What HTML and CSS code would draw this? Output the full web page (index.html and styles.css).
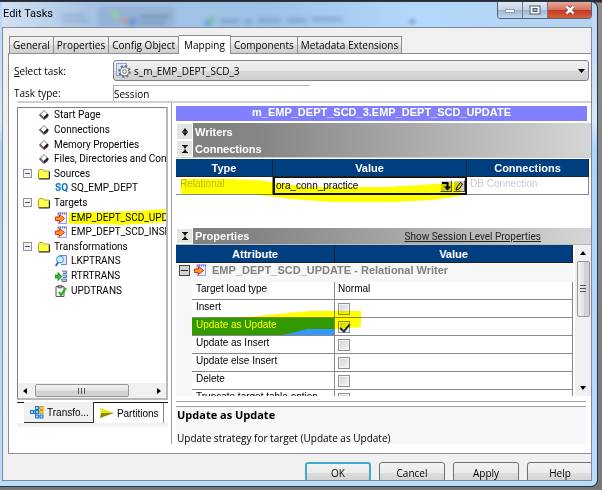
FILE: index.html
```html
<!DOCTYPE html>
<html lang="en">
<head>
    <meta charset="UTF-8">
    <meta name="viewport" content="width=device-width, initial-scale=1.0">
    <title>Edit Tasks</title>
    <link rel="stylesheet" href="styles.css">
</head>
<body>

<!-- Shared icons -->
<svg class="icon-defs" aria-hidden="true">
    <symbol id="icon-page" viewBox="0 0 10 10">
        <path d="M1 5 L5 1 L9 5 L5 9 Z" fill="#111"/>
        <path d="M2 4.500 L5 1.500 L7.500 4 L4.500 7 Z" fill="#fff"/>
        <path d="M1 5 L5 9 L5 7 L2 4 Z" fill="#666"/>
        <path d="M5 8 L9 5 L8 7 L5 9 Z" fill="#703070"/>
    </symbol>
    <symbol id="icon-folder" viewBox="0 0 12 11">
        <path d="M.5 2.500 L1.500 1 H5 L6 2.500 H11 V10 H.5 Z" fill="#ffff4a" stroke="#a8a840"/>
        <path d="M11.500 3 V10.500 H1" fill="none" stroke="#222"/>
    </symbol>
    <symbol id="icon-target" viewBox="0 0 12 12">
        <path d="M3 1 H11.500 V11.500 H3 Z" fill="#eef0ff" stroke="#9a9ae8"/>
        <path d="M3 1.500 H12" stroke="#6666dd" stroke-width="2" stroke-dasharray="1 1"/>
        <path d="M.5 5 H4.500 V2.500 L9.500 6.500 L4.500 10.500 V8.500 H.5 Z" fill="#ff9a1a" stroke="#d8321a"/>
    </symbol>
    <symbol id="icon-lookup" viewBox="0 0 12 12">
        <path d="M4 .5 H11.500 V9.500 H6" fill="#dfe6ff" stroke="#6a7ee0"/>
        <circle cx="5" cy="4.500" r="3.500" fill="#c8ecff" stroke="#3b8fe0"/>
        <path d="M3 7.500 L.8 11" stroke="#2a62c8" stroke-width="2"/>
    </symbol>
    <symbol id="icon-router" viewBox="0 0 12 12">
        <path d="M0 5 H3 V2.500 L7 6.500 L3 10.500 V8 H0 Z" fill="#33b52e" stroke="#127a18" stroke-width=".7"/>
        <path d="M7 1 H11.500 V3.500 H8 M7.500 5 H11.500 V7.500 H8 M6.500 9 H11.500 V11.500 H7 Z" fill="#b7ccec" stroke="#3c5f9c" stroke-width=".8"/>
    </symbol>
    <symbol id="icon-update" viewBox="0 0 12 12">
        <path d="M1 1.500 H9 V11.500 H1 Z" fill="#fff" stroke="#555"/>
        <path d="M3 .5 H7 V3 H3 Z" fill="#999" stroke="#444" stroke-width=".6"/>
        <path d="M4 7 L6 10 L11 3" fill="none" stroke="#2eb12a" stroke-width="2.200"/>
    </symbol>
    <symbol id="icon-collapse" viewBox="0 0 8 10">
        <path d="M1 1.500 H7 M1 8.500 H7" stroke="#111"/>
        <path d="M2 2 H6 L4 5 L6 8 H2 L4 5 Z" fill="#111"/>
    </symbol>
    <symbol id="icon-expand" viewBox="0 0 8 10">
        <path d="M4 1 L6.500 4.200 H1.500 Z M4 9 L6.500 5.800 H1.500 Z M1 4.500 H7 V5.500 H1 Z" fill="#111"/>
    </symbol>
</svg>

<div class="dialog">

    <!-- Title bar -->
    <div class="titlebar">
        <svg class="glass" viewBox="0 0 480 26" aria-hidden="true">
            <g class="glass-blur">
                <path d="M52 14 H78 M52 20 H80" stroke="#7893b4" stroke-width="2"/>
                <rect x="90" y="5" width="80" height="21" fill="#8eacd0"/>
                <circle cx="108" cy="13" r="4" fill="#8ed07c"/>
                <circle cx="118" cy="19" r="3" fill="#e08860"/>
                <circle cx="126" cy="21" r="4" fill="#4f7fd0"/>
                <path d="M133 15 H165 M133 22 H160" stroke="#506c90" stroke-width="2"/>
                <circle cx="208" cy="19" r="4" fill="#78c078"/>
                <circle cx="204" cy="22" r="3" fill="#5b88d8"/>
                <path d="M218 20 H238 M243 20 H251 M257 19 H280 M287 19 H308 M313 18 H345" stroke="#6889b0" stroke-width="4" stroke-dasharray="4 1"/>
                <path d="M413 19 H421 L417 23 Z" fill="#33435c"/>
            </g>
        </svg>
        <h1>Edit Tasks</h1>
        <div class="window-buttons">
            <button type="button" aria-label="Minimize">
                <svg width="12" height="10"><rect x="1.500" y="4.500" width="9" height="3" fill="#fff" stroke="#8b9bb0"/></svg>
            </button>
            <button type="button" aria-label="Maximize">
                <svg width="12" height="10"><rect x="1" y="1" width="10" height="8" fill="#fff" stroke="#4c586c"/><rect x="4" y="3.500" width="4" height="3" fill="#a9b9cc" stroke="#4c586c"/></svg>
            </button>
            <button type="button" class="close" aria-label="Close">
                <svg width="12" height="10"><path d="M2.500 1.500 L9.500 8.500 M9.500 1.500 L2.500 8.500" stroke="#6b3440" stroke-width="4"/><path d="M2.500 1.500 L9.500 8.500 M9.500 1.500 L2.500 8.500" stroke="#fff" stroke-width="2.500"/></svg>
            </button>
        </div>
    </div>

    <div class="client">

        <div class="tabs" role="tablist">
            <button type="button" role="tab">General</button>
            <button type="button" role="tab">Properties</button>
            <button type="button" role="tab">Config Object</button>
            <button type="button" role="tab" class="active" aria-selected="true">Mapping</button>
            <button type="button" role="tab">Components</button>
            <button type="button" role="tab">Metadata Extensions</button>
        </div>

        <div class="tab-page">

            <!-- Task selection -->
            <div class="task-form">
                <label for="task"><u>S</u>elect task:</label>
                <div class="task-select">
                    <select id="task">
                        <option>s_m_EMP_DEPT_SCD_3</option>
                    </select>
                    <svg class="task-icon" viewBox="0 0 15 15" aria-hidden="true">
                        <rect x=".5" y=".5" width="10" height="12" fill="#dde3fb" stroke="#8e9ce0"/>
                        <circle cx="8.500" cy="8.500" r="5.400" fill="none" stroke="#6c7280" stroke-width="2" stroke-dasharray="2.200 2"/>
                        <circle cx="8.500" cy="8.500" r="4.500" fill="#e8ebf0" stroke="#6c7280"/>
                        <circle cx="8.500" cy="8.500" r="1.800" fill="#fff" stroke="#6c7280"/>
                    </svg>
                    <svg class="task-arrow" viewBox="0 0 7 4" aria-hidden="true"><path d="M0 0 H7 L3.500 4 Z"/></svg>
                </div>
                <label for="taskType">Task type:</label>
                <input type="text" id="taskType" value="Session" readonly>
            </div>

            <div class="mapping">

                <!-- Left navigation -->
                <div class="navigator">
                    <div class="tree-box">
                        <ul class="tree">
                            <li class="page"><svg><use href="#icon-page"/></svg>Start Page</li>
                            <li class="page"><svg><use href="#icon-page"/></svg>Connections</li>
                            <li class="page"><svg><use href="#icon-page"/></svg>Memory Properties</li>
                            <li class="page"><svg><use href="#icon-page"/></svg>Files, Directories and Com</li>
                            <li class="folder"><span class="toggle"></span><svg><use href="#icon-folder"/></svg>Sources</li>
                            <li class="leaf"><b class="sq">SQ</b>SQ_EMP_DEPT</li>
                            <li class="folder"><span class="toggle"></span><svg><use href="#icon-folder"/></svg>Targets</li>
                            <li class="leaf">
                                <svg><use href="#icon-target"/></svg>EMP_DEPT_SCD_UPD
                                <svg class="marker marker-tree" viewBox="0 0 100 18" preserveAspectRatio="none" aria-hidden="true"><path d="M1 4 L40 3 L70 2 L98 0 V14 L80 15 L55 17 L36 16 L1 16 Z"/></svg>
                            </li>
                            <li class="leaf"><svg><use href="#icon-target"/></svg>EMP_DEPT_SCD_INSE</li>
                            <li class="folder"><span class="toggle"></span><svg><use href="#icon-folder"/></svg>Transformations</li>
                            <li class="leaf"><svg><use href="#icon-lookup"/></svg>LKPTRANS</li>
                            <li class="leaf"><svg><use href="#icon-router"/></svg>RTRTRANS</li>
                            <li class="leaf"><svg><use href="#icon-update"/></svg>UPDTRANS</li>
                        </ul>
                        <div class="scroll-x" aria-hidden="true">
                            <svg width="4" height="6"><path d="M4 0 V6 L0 3 Z"/></svg>
                            <span class="thumb"><i></i></span>
                            <svg width="4" height="6"><path d="M0 0 V6 L4 3 Z"/></svg>
                        </div>
                    </div>
                    <div class="view-tabs">
                        <button type="button" class="active">
                            <svg width="14" height="14" aria-hidden="true">
                                <path d="M3 7 L7 3 M3 7 H7 M3 7 L7 11 M8 3 H11 M8 7 H11 M8 11 H11" stroke="#2b7fd0"/>
                                <g fill="#9fd4ff" stroke="#1c78cc"><rect x=".5" y="5.500" width="3" height="3"/><rect x="5.500" y="1.500" width="3" height="3"/><rect x="5.500" y="5.500" width="3" height="3"/><rect x="5.500" y="10" width="3" height="3"/><rect x="10" y="10" width="3" height="3"/></g>
                                <g fill="#ffd84a" stroke="#d89a10"><rect x="10" y="1.500" width="3" height="3"/><rect x="10" y="5.500" width="3" height="3"/></g>
                            </svg>
                            Transfo...
                        </button>
                        <button type="button">
                            <svg width="14" height="12" aria-hidden="true"><path d="M0 1 L14 6 H1 Z" fill="#e8e800"/><path d="M1 6 H14 L0 11 Z" fill="#8a8a00"/></svg>
                            Partitions
                        </button>
                    </div>
                </div>

                <!-- Right details -->
                <div class="details">
                    <h2>m_EMP_DEPT_SCD_3.EMP_DEPT_SCD_UPDATE</h2>

                    <div class="section-bars">
                        <div class="section-bar">
                            <button type="button" aria-label="Expand writers"><svg><use href="#icon-expand"/></svg></button>
                            <h3>Writers</h3>
                        </div>
                        <div class="section-bar">
                            <button type="button" aria-label="Collapse connections"><svg><use href="#icon-collapse"/></svg></button>
                            <h3>Connections</h3>
                        </div>
                    </div>

                    <div class="connections">
                        <table>
                            <colgroup><col class="col-type"><col class="col-value"><col></colgroup>
                            <thead>
                                <tr><th>Type</th><th>Value</th><th>Connections</th></tr>
                            </thead>
                            <tbody>
                                <tr>
                                    <td class="type">Relational</td>
                                    <td class="value">
                                        <div class="value-cell">
                                            <span>ora_conn_practice</span>
                                            <button type="button" aria-label="Browse connections"><svg viewBox="0 0 10 10"><path d="M1 2 H6.500 V6" fill="none" stroke="#000" stroke-width="2"/><path d="M3 5.500 H10 L6.500 9.500 Z"/></svg></button>
                                            <button type="button" aria-label="Edit connection"><svg viewBox="0 0 10 10"><path d="M2 9 L3 6 L6.500 1.500 L8.500 3 L5 8 Z" fill="#ddd" stroke="#000"/></svg></button>
                                        </div>
                                    </td>
                                    <td class="link">DB Connection</td>
                                </tr>
                            </tbody>
                        </table>
                        <svg class="marker marker-connection" viewBox="0 0 280 26" preserveAspectRatio="none" aria-hidden="true"><path d="M0 2 L50 2 L84 4 L125 10 H205 L240 8 L280 5 V19 L250 23 L215 25 H150 L110 22 L72 17 L0 17 Z"/></svg>
                    </div>

                    <div class="section-bar">
                        <button type="button" aria-label="Collapse properties"><svg><use href="#icon-collapse"/></svg></button>
                        <h3>Properties</h3>
                        <a href="#session">Show Session Level Properties</a>
                    </div>

                    <div class="properties">
                        <div class="property-grid">
                            <table>
                                <colgroup><col class="col-gutter"><col class="col-attribute"><col></colgroup>
                                <thead>
                                    <tr><th colspan="2">Attribute</th><th>Value</th></tr>
                                </thead>
                                <tbody>
                                    <tr class="group">
                                        <td colspan="3">
                                            <div class="group-title">
                                                <span class="toggle"></span>
                                                <svg><use href="#icon-target"/></svg>
                                                <b>EMP_DEPT_SCD_UPDATE - Relational Writer</b>
                                            </div>
                                        </td>
                                    </tr>
                                    <tr><td class="gutter"></td><td>Target load type</td><td>Normal</td></tr>
                                    <tr><td class="gutter"></td><td><label for="insert">Insert</label></td><td><input type="checkbox" id="insert"></td></tr>
                                    <tr class="selected"><td class="gutter"></td><td><label for="updUpdate">Update as Update</label></td><td><input type="checkbox" id="updUpdate" checked></td></tr>
                                    <tr><td class="gutter"></td><td><label for="updInsert">Update as Insert</label></td><td><input type="checkbox" id="updInsert"></td></tr>
                                    <tr><td class="gutter"></td><td><label for="updElse">Update else Insert</label></td><td><input type="checkbox" id="updElse"></td></tr>
                                    <tr><td class="gutter"></td><td><label for="delete">Delete</label></td><td><input type="checkbox" id="delete"></td></tr>
                                    <tr><td class="gutter"></td><td><label for="truncate">Truncate target table option</label></td><td><input type="checkbox" id="truncate"></td></tr>
                                </tbody>
                            </table>
                            <svg class="marker marker-update" viewBox="0 0 170 26" preserveAspectRatio="none" aria-hidden="true"><path d="M0 7 L55 6 L85 3 L118 0 H169 V16 L143 18 L115 18 L100 22 L90 24 L0 24 Z"/></svg>
                        </div>
                        <div class="scroll-y" aria-hidden="true">
                            <svg width="6" height="4"><path d="M0 4 H6 L3 0 Z"/></svg>
                            <span class="thumb"><i></i></span>
                            <svg width="6" height="4"><path d="M0 0 H6 L3 4 Z"/></svg>
                        </div>
                    </div>

                    <div class="description">
                        <strong>Update as Update</strong>
                        <p>Update strategy for target (Update as Update)</p>
                    </div>
                </div>
            </div>
        </div>

        <div class="footer">
            <button type="button" class="default">OK</button>
            <button type="button">Cancel</button>
            <button type="button">Apply</button>
            <button type="button">Help</button>
        </div>
    </div>
</div>

</body>
</html>
```
FILE: styles.css
```css
* {
    box-sizing: border-box;
}

body {
    margin: 0;
    height: 100vh;
    padding: 1px 4px 3px 0;
    overflow: hidden;
    background: linear-gradient(#2c2c38 0, #2c2c38 2px, #8a8a8a 3px, #777 100%);
    font-family: "Open Sans", "Noto Sans", sans-serif;
    font-size: 10px;
    color: #000;
}

button, input, select {
    font: inherit;
    color: inherit;
    margin: 0;
    padding: 0;
}

h1, h2, h3, p, ul {
    margin: 0;
    padding: 0;
}

.icon-defs {
    position: absolute;
    width: 0;
    height: 0;
}

.dialog {
    display: flex;
    flex-direction: column;
    height: 100%;
    padding: 0 5px 5px 2px;
    border: 1px solid #2d3440;
    border-left: 0;
    border-radius: 0 7px 7px 0;
    background: linear-gradient(#b7d6f5, #d5e9fb 25%, #a9d4fb 30%, #b9dcfb);
}

/* Title bar */
.titlebar {
    display: flex;
    position: relative;
    height: 25px;
    flex-shrink: 0;
    align-items: flex-start;
    justify-content: space-between;
    background: linear-gradient(90deg, #d3e2f2 0, #a5c3e4 15%, #9dc2e8 45%, #b3d8fb 70%, #b5d4f2);
}

.titlebar h1 {
    position: relative;
    padding-left: 1px;
    font-family: Roboto, "Noto Sans", sans-serif;
    font-size: 11px;
    font-weight: normal;
    line-height: 24px;
}

.glass {
    position: absolute;
    left: 0;
    top: 0;
    width: 480px;
    height: 25px;
}

.glass-blur {
    filter: blur(2px);
    opacity: 0.7;
}

.window-buttons {
    display: flex;
    position: relative;
    height: 17px;
    border: 1px solid #53647a;
    border-top: 0;
    border-radius: 0 0 4px 4px;
    overflow: hidden;
}

.window-buttons button {
    display: flex;
    align-items: center;
    justify-content: center;
    width: 25px;
    border: 0;
    border-right: 1px solid #6a7c94;
    background: linear-gradient(#dce8f5, #c2d3e6 50%, #9fb6cf 51%, #c2d8ee);
}

.window-buttons .close {
    width: 43px;
    border-right: 0;
    background: linear-gradient(#e8a898, #d6705c 50%, #c23a22 51%, #d9603c);
}

/* Dialog body */
.client {
    display: flex;
    flex-direction: column;
    flex: 1;
    min-height: 0;
    padding: 7px 0 0 5px;
    border: 1px solid #7f8b99;
    background: #f0f0f0;
    overflow: hidden;
}

.tabs {
    display: flex;
    align-items: flex-end;
    height: 18px;
    padding-left: 1px;
}

.tabs button {
    height: 17px;
    padding: 0 3px;
    border: 1px solid #8c8e94;
    border-width: 1px 1px 0 0;
    background: linear-gradient(#f3f3f3, #ebebeb 50%, #dcdcdc 51%, #d0d0d0);
    line-height: 16px;
    white-space: nowrap;
}

.tabs button:first-child {
    border-left-width: 1px;
}

.tabs .active {
    position: relative;
    height: 19px;
    padding: 0 5px;
    margin-bottom: -1px;
    background: #fff;
}

.tab-page {
    display: flex;
    flex-direction: column;
    flex: 1;
    min-height: 0;
    padding: 6px 0 9px 5px;
    border: 1px solid #8c8e94;
    border-right: 0;
    background: #fff;
}

.task-form {
    display: grid;
    grid-template-columns: 99px 1fr;
    row-gap: 4px;
    align-items: center;
    padding-right: 2px;
}

.task-select {
    position: relative;
}

.task-select select {
    display: block;
    width: 100%;
    height: 21px;
    padding-left: 20px;
    appearance: none;
    border: 1px solid #808080;
    border-radius: 3px;
    background: linear-gradient(#f2f2f2, #e8e8e8 50%, #d8d8d8 51%, #cfcfcf);
}

.task-icon {
    position: absolute;
    left: 3px;
    top: 3px;
    width: 15px;
    height: 15px;
}

.task-arrow {
    position: absolute;
    right: 4px;
    top: 9px;
    width: 7px;
    height: 4px;
}

#taskType {
    width: 197px;
    height: 16px;
    border: 1px solid #b0b0b0;
    border-width: 1px 0 0 1px;
    outline: 0;
    background: #fff;
}

.mapping {
    display: flex;
    flex: 1;
    min-height: 0;
    margin-left: 3px;
    border-top: 2px solid #d0d0d0;
}

/* Left navigation */
.navigator {
    display: flex;
    flex-direction: column;
    width: 155px;
    flex-shrink: 0;
    padding: 4px 3px 17px 0;
    border-right: 1px solid #a0a0a0;
    font-family: Roboto, "Noto Sans", sans-serif;
}

.tree-box {
    display: flex;
    flex-direction: column;
    justify-content: space-between;
    flex: 1;
    min-height: 0;
    border: 1px solid #808080;
    border-width: 1px 2px 2px 1px;
    border-color: #808080 #b8b8b8 #b8b8b8 #808080;
    overflow: hidden;
}

.tree {
    display: flex;
    flex-direction: column;
    height: 190px;
    list-style: none;
}

.tree li {
    display: flex;
    position: relative;
    flex: 1;
    align-items: center;
    gap: 4px;
    line-height: 14px;
    white-space: nowrap;
}

.tree svg {
    width: 12px;
    height: 12px;
    flex-shrink: 0;
}

.tree .page {
    padding-left: 20px;
}

.tree .folder {
    padding-left: 5px;
}

.tree .leaf {
    padding-left: 37px;
}

.toggle {
    width: 9px;
    height: 9px;
    flex-shrink: 0;
    border: 1px solid #919191;
    background: linear-gradient(#3b5a9a, #3b5a9a) center / 5px 1px no-repeat #f4f4f4;
}

.tree .toggle {
    margin-right: 2px;
}

.sq {
    width: 12px;
    color: #0a74c8;
}

.scroll-x {
    display: flex;
    align-items: center;
    height: 15px;
    padding: 0 5px;
    gap: 8px;
    background: #f0f0f0;
}

.scroll-x .thumb {
    display: flex;
    align-items: center;
    justify-content: center;
    width: 94px;
    height: 13px;
    margin-right: auto;
    border: 1px solid #979797;
    border-radius: 2px;
    background: linear-gradient(#f3f3f3, #e2e2e2 50%, #cfcfcf 51%, #d5d5d5);
}

.scroll-x i {
    width: 8px;
    height: 6px;
    background: repeating-linear-gradient(90deg, #555 0, #555 1px, transparent 1px, transparent 3px);
}

.view-tabs {
    display: flex;
    height: 25px;
    margin-top: 2px;
    padding: 0 0 4px 7px;
    border-top: 1px solid #111;
    background: linear-gradient(#fff, #fff) top / 100% 20px no-repeat #f2f2f2;
    font-family: "Liberation Sans", Arial, sans-serif;
}

.view-tabs button {
    display: flex;
    align-items: center;
    gap: 3px;
    padding: 0 4px 0 6px;
    border: 0;
    border-right: 1px solid #888;
    background: none;
    white-space: nowrap;
}

.view-tabs .active {
    margin-top: -1px;
    border-right-color: #333;
    border-bottom: 1px solid #333;
    background: #f0f0f0;
}

/* Right details */
.details {
    display: flex;
    flex-direction: column;
    flex: 1;
    min-width: 0;
    padding: 3px 0 0 4px;
    font-family: "Liberation Sans", Arial, sans-serif;
}

.details h2 {
    height: 15px;
    margin: 0 4px 2px 0;
    background: #8080ff;
    color: #fff;
    font-size: 11px;
    line-height: 13px;
    text-align: center;
}

.section-bars {
    margin-bottom: 1px;
    border-bottom: 1px solid #ccc;
}

.section-bar {
    display: flex;
    align-items: center;
    height: 17px;
    flex-shrink: 0;
    border-bottom: 1px solid #bbb;
    background: linear-gradient(90deg, #808080 0, #858585 20%, #d6d6d6);
}

.section-bars .section-bar {
    border-bottom: 0;
}

.section-bar button {
    display: flex;
    align-items: center;
    justify-content: center;
    width: 17px;
    height: 100%;
    border: 1px solid #fff;
    background: #e4e4e0;
}

.section-bar svg {
    width: 8px;
    height: 10px;
}

.section-bar h3 {
    padding-left: 2px;
    color: #fff;
    font-size: 11px;
    line-height: 14px;
}

.section-bar a {
    margin: 0 50px 0 auto;
    color: #222;
    font-family: Roboto, "Noto Sans", sans-serif;
}

.connections {
    position: relative;
    height: 69px;
    flex-shrink: 0;
    padding-right: 2px;
}

.details table {
    width: 100%;
    table-layout: fixed;
    border-collapse: separate;
    border-spacing: 0;
}

.details th {
    height: 18px;
    padding: 0;
    border-right: 1px solid #222;
    border-bottom: 1px solid #222;
    background: #003f7f;
    color: #fff;
    font-size: 11px;
    line-height: 14px;
}

.details td {
    height: 18px;
    padding: 0 4px;
    border-right: 1px solid #888;
    border-bottom: 1px solid #888;
    line-height: 14px;
    vertical-align: top;
}

.details td:last-child {
    padding-left: 3px;
}

.col-type {
    width: 97px;
}

.col-value {
    width: 194px;
}

.connections .type {
    color: #b8b8b8;
}

.connections .value {
    padding: 0;
    border: 2px solid #111;
    border-top-width: 1px;
}

.connections .link {
    color: #c4cbd6;
}

.value-cell {
    display: flex;
    align-items: center;
    gap: 1px;
    height: 15px;
    padding-left: 1px;
}

.value-cell span {
    flex: 1;
}

.value-cell button {
    width: 12px;
    height: 12px;
    border: 1px solid #fff;
    border-right-color: #555;
    border-bottom-color: #555;
    background: #d4d0c8;
}

.value-cell svg {
    display: block;
    width: 10px;
    height: 10px;
}

/* Property list */
.properties {
    display: flex;
    gap: 2px;
    flex: 1;
    min-height: 0;
}

.property-grid {
    position: relative;
    flex: 1;
    overflow: hidden;
}

.col-gutter {
    width: 16px;
}

.col-attribute {
    width: 143px;
}

.details .gutter {
    padding: 0;
    border: 0;
    background: #f7f7f7;
}

.details .group td {
    height: 19px;
    padding: 0 1px;
    border: 0;
    background: #f7f7f7;
}

.group-title {
    display: flex;
    align-items: center;
    gap: 4px;
    padding-left: 2px;
    color: #808080;
    font-size: 11px;
}

.group-title .toggle {
    width: 11px;
    height: 11px;
    border-color: #444;
    background: linear-gradient(#222, #222) center / 7px 1px no-repeat #d4d4d4;
}

.group-title svg {
    width: 12px;
    height: 12px;
    margin-right: 2px;
}

.selected td:nth-child(2) {
    background: #3399ff;
    color: #fff;
}

.details input[type="checkbox"] {
    display: block;
    width: 12px;
    height: 12px;
    margin-top: 3px;
    appearance: none;
    border: 1px solid #8e8f8f;
    outline: 1px solid #f4f4f4;
    outline-offset: -2px;
    background: linear-gradient(135deg, #cfd2d8, #f6f6f6);
}

.details input:checked::before {
    content: "";
    display: block;
    width: 4px;
    height: 8px;
    margin-left: 3px;
    border: solid #222c50;
    border-width: 0 2px 2px 0;
    transform: rotate(40deg);
}

.scroll-y {
    display: flex;
    flex-direction: column;
    align-items: center;
    gap: 6px;
    width: 16px;
    padding: 6px 0;
    background: #f0f0f0;
}

.scroll-y .thumb {
    display: flex;
    align-items: center;
    justify-content: center;
    width: 13px;
    height: 56px;
    margin-bottom: auto;
    border: 1px solid #979797;
    border-radius: 2px;
    background: linear-gradient(90deg, #f3f3f3, #e2e2e2 50%, #cfcfcf 51%, #d5d5d5);
}

.scroll-y i {
    width: 6px;
    height: 8px;
    background: repeating-linear-gradient(#555 0, #555 1px, transparent 1px, transparent 3px);
}

.description {
    height: 43px;
    flex-shrink: 0;
    margin: 5px 5px 0 0;
    padding: 6px 1px 0;
    border-top: 1px solid #a0a0a0;
    background: linear-gradient(#fff 0, #fff 4px, #a0a0a0 4px, #a0a0a0 5px, #f7f7f7 5px);
    font-family: "Open Sans", "Noto Sans", sans-serif;
    line-height: 14px;
}

.description strong {
    display: block;
    margin-bottom: 9px;
    font-size: 11px;
}

/* Yellow highlighter strokes */
.marker {
    position: absolute;
    fill: #ffff00;
    mix-blend-mode: multiply;
    pointer-events: none;
}

.tree .marker-tree {
    left: 50px;
    top: -1px;
    width: 99px;
    height: 17px;
}

.marker-connection {
    left: 5px;
    top: 18px;
    width: 280px;
    height: 26px;
}

.marker-update {
    left: 16px;
    top: 66px;
    width: 170px;
    height: 26px;
}

/* Bottom buttons */
.footer {
    display: flex;
    justify-content: flex-end;
    gap: 8px;
    height: 26px;
    flex-shrink: 0;
    margin-right: -2px;
    padding-top: 8px;
    overflow: hidden;
}

.footer button {
    width: 66px;
    height: 22px;
    flex-shrink: 0;
    border: 1px solid #707070;
    border-radius: 3px;
    background: linear-gradient(#f2f2f2, #ebebeb 50%, #dddddd 51%, #cfcfcf);
    line-height: 18px;
}

.footer .default {
    border: 2px solid #3fa9d0;
}
```
